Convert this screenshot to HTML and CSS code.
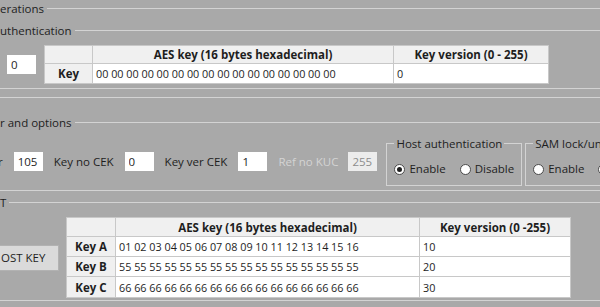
FILE: index.html
```html
<!DOCTYPE html>
<html lang="en">
<head>
    <meta charset="UTF-8">
    <title>SAM key operations</title>
    <link rel="stylesheet" href="styles.css">
</head>
<body>
    <fieldset class="group outer">
        <legend>erations</legend>
        <fieldset class="group auth">
            <legend>uthentication</legend>
            <div class="row">
                <input class="field key-no" type="text" value="0">
                <table class="grid grid-auth">
                    <colgroup><col class="col-head"><col class="col-key"><col class="col-ver"></colgroup>
                    <tr class="head-row"><th></th><th>AES key (16 bytes hexadecimal)</th><th>Key version (0 - 255)</th></tr>
                    <tr><th>Key</th><td>00 00 00 00 00 00 00 00 00 00 00 00 00 00 00 00</td><td>0</td></tr>
                </table>
            </div>
        </fieldset>
    </fieldset>

    <fieldset class="group options">
        <legend>r and options</legend>
        <div class="row">
            <span class="label">r</span>
            <input class="field" type="text" value="105">
            <span class="label">Key no CEK</span>
            <input class="field" type="text" value="0">
            <span class="label">Key ver CEK</span>
            <input class="field" type="text" value="1">
            <span class="label disabled">Ref no KUC</span>
            <input class="field" type="text" value="255" disabled>
            <fieldset class="box host">
                <legend>Host authentication</legend>
                <label class="radio checked"><span class="dot"></span>Enable</label>
                <label class="radio"><span class="dot"></span>Disable</label>
            </fieldset>
            <fieldset class="box sam">
                <legend>SAM lock/unlock</legend>
                <label class="radio"><span class="dot"></span>Enable</label>
                <label class="radio checked"><span class="dot"></span>Disable</label>
            </fieldset>
        </div>
    </fieldset>

    <fieldset class="group keys">
        <legend>T</legend>
        <div class="row">
            <button class="host-key">OST KEY</button>
            <table class="grid grid-keys">
                <colgroup><col class="col-head"><col class="col-key"><col class="col-ver"></colgroup>
                <tr class="head-row"><th></th><th>AES key (16 bytes hexadecimal)</th><th>Key version (0 -255)</th></tr>
                <tr><th>Key A</th><td>01 02 03 04 05 06 07 08 09 10 11 12 13 14 15 16</td><td>10</td></tr>
                <tr><th>Key B</th><td>55 55 55 55 55 55 55 55 55 55 55 55 55 55 55 55</td><td>20</td></tr>
                <tr><th>Key C</th><td>66 66 66 66 66 66 66 66 66 66 66 66 66 66 66 66</td><td>30</td></tr>
            </table>
        </div>
    </fieldset>
</body>
</html>
```

FILE: styles.css
```css
body {
    margin: 0;
    width: 600px;
    height: 307px;
    overflow: hidden;
    background-color: #a9a9a9;
    font-family: "Open Sans", "Noto Sans", sans-serif;
    font-size: 11.5px;
    color: #1e1e1e;
}
.group {
    margin: 0 -20px 0 -20px;
    padding: 7px 0 8px 19px;
    border: 1px solid #d3d3d3;
    min-width: 0;
}
.group > legend {
    padding: 0 3px 0 0;
    line-height: 15px;
}
.outer {
    margin-top: 1px;
}
.auth {
    padding: 7px 0 4px 19px;
}
.options {
    margin-top: 17px;
    padding: 6px 0 4px 19px;
}
.keys {
    margin-top: 4px;
    padding: 7px 0 2px 19px;
}
.row {
    display: flex;
    align-items: center;
}
.row > * {
    flex-shrink: 0;
}
.field {
    box-sizing: border-box;
    width: 29px;
    height: 19px;
    margin: 0;
    padding: 0 4px;
    border: none;
    background-color: white;
    font: inherit;
    color: #1e1e1e;
}
.field:disabled {
    background-color: #ececec;
    color: #8c8c8c;
}
.key-no {
    margin: 0 8px 0 7px;
}
.options .row {
    gap: 11px;
    margin-left: -2px;
}
.label.disabled {
    color: #d4d4d4;
}
.label.disabled + .field {
    margin-left: -1px;
}
.box {
    box-sizing: border-box;
    width: 135px;
    margin: 0;
    padding: 10px 7px 8px 7px;
    border: 1px solid #d3d3d3;
    display: flex;
    align-items: center;
    gap: 14px;
}
.box > legend {
    padding: 0 2px;
    line-height: 15px;
}
.host {
    margin-left: -2px;
}
.sam {
    margin-left: -8px;
}
.radio {
    display: flex;
    align-items: center;
    gap: 4px;
    line-height: 16px;
}
.dot {
    box-sizing: border-box;
    width: 11px;
    height: 11px;
    border: 1px solid #4a4a4a;
    border-radius: 50%;
    background-color: white;
    position: relative;
}
.radio.checked .dot::after {
    content: "";
    position: absolute;
    left: 2px;
    top: 2px;
    width: 5px;
    height: 5px;
    border-radius: 50%;
    background-color: #1e1e1e;
}
.host-key {
    box-sizing: border-box;
    width: 79px;
    height: 26px;
    margin: 0 7px 0 -20px;
    padding: 0 0 0 20px;
    text-align: left;
    background-color: #dadada;
    border: 1px solid #b2b2b2;
    font: inherit;
    color: #1e1e1e;
}
.grid {
    border-collapse: collapse;
    table-layout: fixed;
    background-color: white;
}
.grid th, .grid td {
    border: 1px solid #c8c8c8;
    padding: 0 3px;
    white-space: nowrap;
    overflow: hidden;
}
.grid th {
    background-color: #f0f0f0;
    font-size: 11.5px;
    font-weight: 700;
    text-align: center;
}
.grid td {
    font-size: 10.8px;
    text-align: left;
}
.grid tr {
    height: 20px;
}
.grid .head-row {
    height: 18px;
}
.grid-auth .col-head { width: 48px; }
.grid-auth .col-key { width: 301px; }
.grid-auth .col-ver { width: 155px; }
.grid-keys .col-head { width: 49px; }
.grid-keys .col-key { width: 304px; }
.grid-keys .col-ver { width: 151px; }
.grid-keys .head-row {
    height: 19px;
}
.grid-keys tr:last-child {
    height: 21px;
}
```
